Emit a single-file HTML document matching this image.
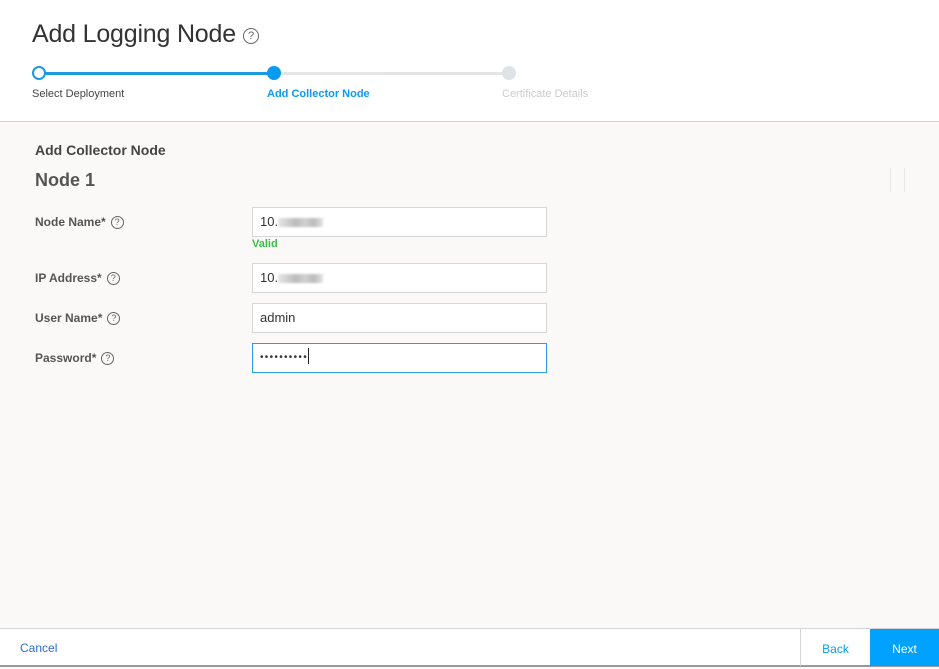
<!DOCTYPE html>
<html><head><meta charset="utf-8"><style>
*{box-sizing:border-box;margin:0;padding:0}
body{width:939px;height:667px;overflow:hidden;background:#faf9f8;font-family:"Liberation Sans","DejaVu Sans",sans-serif;position:relative;color:#333}
.hdr{position:absolute;left:0;top:0;width:939px;height:122px;background:#fff;border-bottom:1px solid #d4d4d4}
h1{position:absolute;left:32px;top:20px;font-size:25px;font-weight:normal;color:#333;letter-spacing:-0.2px}
.q{display:inline-block;border:1px solid #666;border-radius:50%;text-align:center;color:#666;font-weight:normal}
.bigq{position:absolute;left:243px;top:28px;width:16px;height:16px;font-size:11px;line-height:14px}
.line{position:absolute;top:72px;height:3px}
.dot{position:absolute;width:14px;height:14px;border-radius:50%;top:66px}
.sl{position:absolute;top:88px;font-size:11px}
.sec{position:absolute;left:35px;top:142px;font-size:14px;font-weight:bold;color:#444}
.node{position:absolute;left:35px;top:170px;font-size:18px;font-weight:bold;color:#555}
.lbl{position:absolute;left:35px;font-size:12px;font-weight:bold;color:#555}
.lbl .q{width:13px;height:13px;font-size:9px;line-height:11px;margin-left:5px;vertical-align:1px}
.inp{position:absolute;left:252px;width:295px;height:30px;background:#fff;border:1px solid #d6d6d6;font-size:13px;padding:0 0 0 7px;line-height:28px;color:#333}
.blur{display:inline-block;width:45px;height:9px;background:linear-gradient(90deg,#e6e6e6,#bbb 40%,#d0d0d0 60%,#bbb 80%,#e6e6e6);vertical-align:-1px;filter:blur(1px)}
.ftr{position:absolute;left:0;top:628px;width:939px;height:39px;background:#fff;border-top:1px solid #d4d4d4;border-bottom:2px solid #999}
</style></head><body>
<div class="hdr">
<h1>Add Logging Node</h1><span class="q bigq">?</span>
<div class="line" style="left:40px;width:234px;background:#1a9ae0"></div>
<div class="line" style="left:274px;width:236px;background:#e3e5e8"></div>
<div class="dot" style="left:32px;background:#fff;border:2px solid #1a9ae0"></div>
<div class="dot" style="left:267px;background:#0a9bf0"></div>
<div class="dot" style="left:502px;background:#e0e3e6"></div>
<div class="sl" style="left:32px;color:#444">Select Deployment</div>
<div class="sl" style="left:267px;color:#0a9bf0;font-weight:bold">Add Collector Node</div>
<div class="sl" style="left:502px;color:#ccc">Certificate Details</div>
</div>
<div class="sec">Add Collector Node</div>
<div class="node">Node 1</div>
<div style="position:absolute;left:890px;top:168px;width:1px;height:24px;background:#e6e6e6"></div>
<div style="position:absolute;left:904px;top:168px;width:1px;height:24px;background:#e6e6e6"></div>
<div class="lbl" style="top:215px">Node Name*<span class="q">?</span></div>
<div class="inp" style="top:207px">10.<span class="blur"></span></div>
<div style="position:absolute;left:252px;top:238px;font-size:11px;font-weight:bold;color:#3dbb4a">Valid</div>
<div class="lbl" style="top:271px">IP Address*<span class="q">?</span></div>
<div class="inp" style="top:263px">10.<span class="blur"></span></div>
<div class="lbl" style="top:311px">User Name*<span class="q">?</span></div>
<div class="inp" style="top:303px">admin</div>
<div class="lbl" style="top:351px">Password*<span class="q">?</span></div>
<div class="inp" style="top:343px;border-color:#2a9fe0;font-size:10px;letter-spacing:1.3px">••••••••••<span style="display:inline-block;width:1px;height:16px;background:#222;vertical-align:-4px;margin-left:0"></span></div>
<div class="ftr">
<div style="position:absolute;left:20px;top:0;line-height:39px;font-size:12px;color:#2b6bd6">Cancel</div>
<div style="position:absolute;left:800px;top:0;width:70px;height:37px;border-left:1px solid #d4d4d4;text-align:center;line-height:40px;font-size:12px;color:#0a9bf0">Back</div>
<div style="position:absolute;left:870px;top:0;width:69px;height:37px;background:#00a2ff;text-align:center;line-height:40px;font-size:12px;color:#fff">Next</div>
</div>
</body></html>
